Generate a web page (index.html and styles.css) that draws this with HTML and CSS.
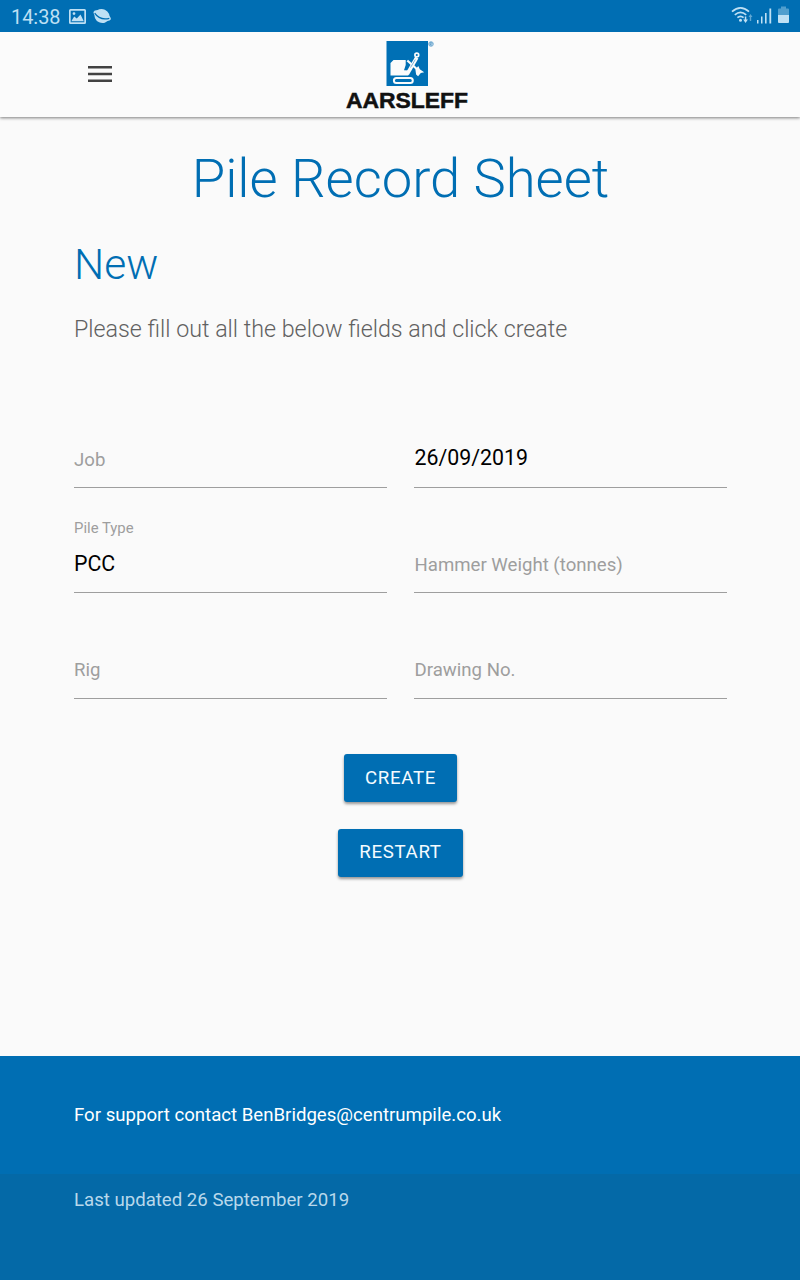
FILE: index.html
```html
<!DOCTYPE html>
<html lang="en">
<head>
<meta charset="utf-8">
<title>Pile Record Sheet</title>
<link rel="stylesheet" href="styles.css">
</head>
<body>
<div class="status">
  <span class="time">14:38</span>
  <svg class="pic" width="17" height="15" viewBox="0 0 17 15"><path fill="currentColor" fill-rule="evenodd" d="M1.500 0h14A1.500 1.500 0 0 1 17 1.500v12a1.500 1.500 0 0 1-1.500 1.500h-14A1.500 1.500 0 0 1 0 13.500v-12A1.500 1.500 0 0 1 1.500 0zM1.700 1.700v11.600h13.600V1.700zM2.300 12.300l2.900-4.800 2.600 2L11.500 5.500l3.300 6.800zM5 3.200a1.400 1.400 0 1 1 0 2.800a1.400 1.400 0 0 1 0-2.800z"/></svg>
  <svg class="planet" width="20" height="16" viewBox="0 0 20 16"><g transform="rotate(25 10 8)"><ellipse cx="10" cy="8" rx="7.600" ry="6.900" fill="currentColor"/><ellipse cx="10" cy="7.600" rx="9.400" ry="4" fill="currentColor"/><path d="M2.200 8.500Q10 13.200 17.600 7" fill="none" stroke="#006eb3" stroke-width="1.200"/></g></svg>
  <div class="signals">
    <svg width="60" height="20" viewBox="0 0 60 20">
      <g fill="none" stroke="currentColor" stroke-width="1.700"><path d="M2 6.700Q10.500 -1 19 6.700M4.800 9.800Q10.500 4.800 16.200 9.800M7.400 12.700Q10.500 10 13.600 12.700"/></g>
      <circle cx="10.500" cy="15.200" r="1.500" fill="currentColor"/>
      <path d="M13.200 14.500h1.600v-3h1.500v3h1.600l-2.350 3.500z" fill="currentColor"/>
      <path d="M19.800 16v-4h-1.300l2-3 2 3h-1.300v4z" fill="currentColor" opacity=".5"/>
      <path d="M27 15h1.500v3.500h-1.500zM31 11.500h1.500v7h-1.500zM35 8h1.600v10.500h-1.600zM39.400 3.500h1.800v15h-1.800z" fill="currentColor"/>
      <path d="M51 1.500h5v2h2q1 0 1 1v5.500H48V4.500q0-1 1-1h2z" fill="currentColor" opacity=".42"/>
      <path d="M48 10h11v7q0 1-1 1h-9q-1 0-1-1z" fill="currentColor"/>
    </svg>
  </div>
</div>
<header class="bar">
  <svg class="menu" width="24" height="18" viewBox="0 0 24 18"><path fill="#424242" d="M0 1h24v2.600H0zM0 7.700h24v2.600H0zM0 14.400h24v2.600H0z"/></svg>
  <svg class="logo" width="126" height="72" viewBox="0 0 126 72">
    <rect x="41.500" y="1" width="41.500" height="45" fill="#0070b5"/>
    <circle cx="86" cy="4" r="2.300" fill="#b9d6e9" stroke="#73aad1" stroke-width=".9"/><path d="M85.200 5.500v-3h1q1 0 .8 1t-1.800.7l1.600 1.300" fill="none" stroke="#4f95c6" stroke-width=".6"/>
    <path d="M48.500 20h12.200v5l-1.700 5.200 6.200.300-2 5H45.500v-12.500z" fill="#fbfbfb"/>
    <path d="M62.300 20.500L74 31" stroke="#fbfbfb" stroke-width="2.200"/>
    <path d="M71.800 17.500L62.300 34" stroke="#fbfbfb" stroke-width="3.600"/>
    <path d="M70.300 19.500L65.500 27.500" stroke="#0070b5" stroke-width=".5"/>
    <circle cx="71.800" cy="15" r="1.900" fill="#0070b5" stroke="#fbfbfb" stroke-width="1.700"/>
    <path d="M73.300 26l1.500 3.300 4.400 2.900-3.400.8-2.700 3.200-2-1.800-.7-4.900z" fill="#fbfbfb"/>
    <rect x="48.900" y="37.900" width="18.900" height="5" rx="2.500" fill="none" stroke="#fbfbfb" stroke-width="2"/>
    <text class="brand" x="1" y="68.200" textLength="122" lengthAdjust="spacingAndGlyphs">AARSLEFF</text>
  </svg>
</header>
<main class="content">
  <h1>Pile Record Sheet</h1>
  <h2>New</h2>
  <p class="intro">Please fill out all the below fields and click create</p>
  <form class="fields">
    <div class="field"><span class="label">Job</span></div>
    <div class="field right"><span class="value">26/09/2019</span></div>
    <div class="field"><span class="small">Pile Type</span><span class="value low">PCC</span></div>
    <div class="field right"><span class="label">Hammer Weight (tonnes)</span></div>
    <div class="field"><span class="label high">Rig</span></div>
    <div class="field right"><span class="label high">Drawing No.</span></div>
  </form>
  <div class="actions">
    <button class="btn create" type="button">CREATE</button>
    <button class="btn restart" type="button">RESTART</button>
  </div>
</main>
<footer class="footer">
  <div class="support">For support contact BenBridges@centrumpile.co.uk</div>
  <div class="updated">Last updated 26 September 2019</div>
</footer>
</body>
</html>
```
FILE: styles.css
```css
* { box-sizing: border-box; }
body {
  margin: 0;
  height: 1280px;
  display: flex;
  flex-direction: column;
  background: #fafafa;
  font-family: Roboto, sans-serif;
  font-size: 18.62px;
  overflow: hidden;
}
.status {
  height: 32px;
  flex: none;
  display: flex;
  align-items: center;
  padding: 0 10px 0 11px;
  background: #006eb3;
  color: #bfe0f4;
  position: relative;
  z-index: 1;
}
.time { width: 58px; font-size: 19.9px; line-height: 30px; padding-top: 3px; }
.pic { margin-top: 1px; }
.planet { margin-left: 6px; }
.signals { margin-left: auto; display: flex; padding-bottom: 2px; }
.bar {
  height: 85px;
  flex: none;
  display: flex;
  align-items: flex-start;
  background: #fbfbfb;
  box-shadow: 0 1px 3px rgba(0, 0, 0, .5);
}
.menu { margin: 33px 0 0 88px; }
.logo { margin: 8px 0 0 233px; }
.brand { font: bold 21.6px "Liberation Sans", Arial, sans-serif; fill: #111; stroke: #111; stroke-width: .5px; }
.content { flex: none; height: 939px; padding: 0 73px 0 74px; }
h1, h2, p { margin: 0; font-weight: 300; }
h1 { padding-top: 27px; font-size: 54.400px; line-height: 70px; text-align: center; color: #006eb3; }
h2 { padding-top: 26px; font-size: 42.500px; line-height: 50px; color: #006eb3; }
.intro { padding-top: 21px; font-size: 23.270px; line-height: 37px; color: #616161; }
.fields {
  display: grid;
  grid-template-columns: 313px 313px;
  column-gap: 27px;
  grid-template-rows: 105px 105px 106px;
  margin-top: 35px;
}
.field {
  display: flex;
  flex-direction: column;
  justify-content: flex-end;
  border-bottom: 1px solid #9e9e9e;
}
.field.right { padding-left: .5px; }
.label { line-height: 24px; padding-bottom: 15px; color: #9e9e9e; }
.label.high { padding-bottom: 16px; }
.small { font-size: 14.900px; line-height: 18px; padding-bottom: 13px; color: #9e9e9e; }
.value { font-size: 21.330px; line-height: 28px; padding-bottom: 15px; color: #000; }
.value.low { padding-bottom: 14px; }
.actions { display: flex; flex-direction: column; align-items: center; gap: 27px; padding-top: 55px; }
.btn {
  height: 48px;
  border: 0;
  padding: 0;
  border-radius: 3px;
  background: #006eb3;
  color: #f4fbff;
  font: 18.670px/48px Roboto, sans-serif;
  letter-spacing: .67px;
  box-shadow: 0 2px 3px rgba(0, 0, 0, .4);
}
.create { width: 113px; }
.restart { width: 125px; padding-bottom: 2px; line-height: 46px; }
.footer { flex: 1; display: flex; flex-direction: column; background: #006eb3; }
.support { height: 118px; padding: 47px 74px 0; line-height: 25px; color: #fff; }
.updated { flex: 1; padding: 14px 74px 0; line-height: 25px; background: #0469a7; color: #b8d8eb; }
```
